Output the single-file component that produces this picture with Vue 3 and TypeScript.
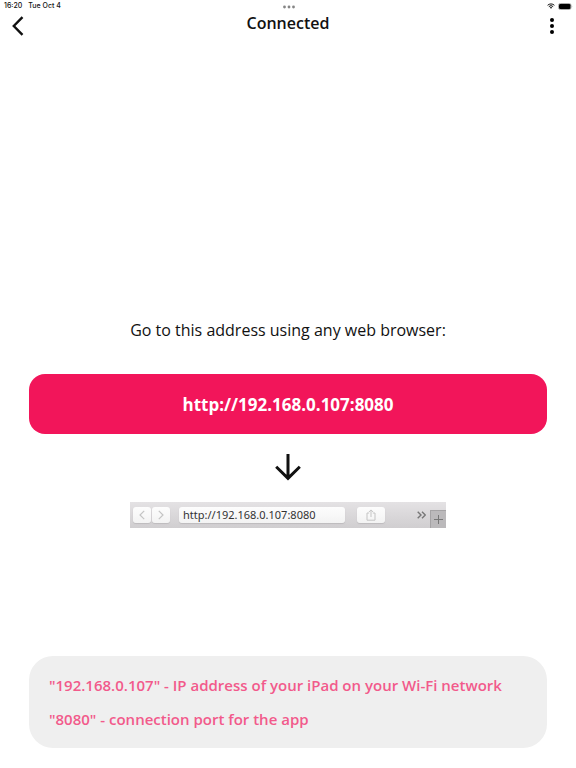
<script setup lang="ts">
import { computed, ref } from 'vue'

const host = ref('192.168.0.107')
const port = ref('8080')
const address = computed(() => `http://${host.value}:${port.value}`)
</script>

<template>
  <div class="screen">
    <div class="status">
      <div class="clock"><span>16:20</span><span>Tue Oct 4</span></div>
      <svg class="grabber" viewBox="0 0 12 4" aria-hidden="true">
        <circle cx="1.5" cy="2" r="1.4" /><circle cx="6" cy="2" r="1.4" /><circle cx="10.5" cy="2" r="1.4" />
      </svg>
      <div class="indicators">
        <svg class="wifi" viewBox="0 0 16 12" aria-hidden="true">
          <path d="M1.2 4.6a9.8 9.8 0 0 1 13.6 0M3.7 7.2a6.2 6.2 0 0 1 8.6 0" />
          <path class="dot" d="M5.5 9a3.7 3.7 0 0 1 5 0L8 11.6z" />
        </svg>
        <svg class="battery" viewBox="0 0 15 7" aria-hidden="true">
          <rect class="case" x="0.5" y="0.5" width="12.5" height="6" rx="1.8" />
          <rect x="1" y="1" width="11.5" height="5" rx="1.2" />
          <path class="cap" d="M13.8 2.4q1 1.1 0 2.2z" />
        </svg>
      </div>
    </div>

    <header class="bar">
      <button class="icon-button" type="button" aria-label="Back">
        <svg class="back" viewBox="0 0 12 20" aria-hidden="true"><path d="M10.5 1.2 1.8 10l8.7 8.8" /></svg>
      </button>
      <h1>Connected</h1>
      <button class="icon-button end" type="button" aria-label="More options">
        <svg class="more" viewBox="0 0 4 16" aria-hidden="true">
          <circle cx="2" cy="2" r="2" /><circle cx="2" cy="8" r="2" /><circle cx="2" cy="14" r="2" />
        </svg>
      </button>
    </header>

    <main>
      <p class="prompt">Go to this address using any web browser:</p>
      <button class="address" type="button">{{ address }}</button>
      <svg class="arrow" viewBox="0 0 26 28" aria-hidden="true"><path d="M13 0v24M1.2 12.8 13 24.3l11.8-11.5" /></svg>
      <div class="browser">
        <div class="nav">
          <button class="key" type="button" aria-label="Previous page">
            <svg class="chevron" viewBox="0 0 6 10" aria-hidden="true"><path d="M5.2.8 1 5l4.2 4.2" /></svg>
          </button>
          <button class="key" type="button" aria-label="Next page">
            <svg class="chevron" viewBox="0 0 6 10" aria-hidden="true"><path d="M.8.8 5 5 .8 9.2" /></svg>
          </button>
        </div>
        <input class="url" type="text" :value="address" readonly aria-label="Web address" />
        <button class="key share" type="button" aria-label="Share">
          <svg viewBox="0 0 10 12" aria-hidden="true"><path d="M3.2 4H1v7.2h8V4H6.8M5 8V1M2.9 3 5 .9 7.1 3" /></svg>
        </button>
        <button class="overflow" type="button" aria-label="More tools">
          <svg viewBox="0 0 9 8" aria-hidden="true"><path d="M.7.7 4 4 .7 7.3M5 .7 8.3 4 5 7.3" /></svg>
        </button>
        <button class="tab" type="button" aria-label="New tab">
          <svg viewBox="0 0 9 9" aria-hidden="true"><path d="M4.5 0v9M0 4.5h9" /></svg>
        </button>
      </div>
    </main>

    <footer class="note">
      <p>"{{ host }}" - IP address of your iPad on your Wi-Fi network</p>
      <p>"{{ port }}" - connection port for the app</p>
    </footer>
  </div>
</template>

<style>
body {
  margin: 0;
  background: #fff;
}
</style>

<style scoped>
.screen {
  box-sizing: border-box;
  min-height: 100vh;
  display: flex;
  flex-direction: column;
  padding-bottom: 20px;
  color: #111;
  font-family: "Open Sans", "Noto Sans", sans-serif;
}

button {
  margin: 0;
  padding: 0;
  border: 0;
  background: none;
  color: inherit;
  font: inherit;
  cursor: pointer;
}

svg {
  display: block;
}

h1,
p {
  margin: 0;
}

path {
  fill: none;
  stroke: currentColor;
}

.status {
  display: grid;
  grid-template-columns: 1fr auto 1fr;
  align-items: center;
  height: 12px;
  padding: 0 3px 0 4px;
  font: 500 7px/12px Inter, sans-serif;
}

.clock {
  display: flex;
  gap: 6px;
}

.grabber {
  width: 12px;
  height: 4px;
  margin-top: 2px;
  fill: #858585;
}

.indicators {
  display: flex;
  justify-content: flex-end;
  align-items: center;
  gap: 3px;
}

.wifi {
  width: 8px;
  height: 6px;
}

.wifi path {
  stroke-width: 2;
}

.wifi .dot {
  fill: currentColor;
  stroke: none;
}

.battery {
  width: 15px;
  height: 7px;
}

.battery .case {
  fill: none;
  stroke: #aaa;
}

.battery .cap {
  fill: #aaa;
  stroke: none;
}

.bar {
  display: grid;
  grid-template-columns: 1fr auto 1fr;
  align-items: center;
  height: 28px;
  padding: 0 12px;
}

.bar h1 {
  padding-bottom: 6px;
  font-size: 16px;
  line-height: 22px;
  font-weight: 600;
}

.icon-button {
  display: flex;
  align-items: center;
  height: 28px;
  width: 24px;
}

.end {
  justify-self: end;
  justify-content: center;
}

.back {
  width: 12px;
  height: 20px;
}

.back path {
  stroke-width: 2.4;
}

.more {
  width: 4px;
  height: 16px;
}

main {
  flex: 1;
  display: flex;
  flex-direction: column;
  align-items: center;
  justify-content: flex-end;
  padding: 0 29px 128px;
}

.prompt {
  font-size: 16px;
  line-height: 24px;
}

.address {
  width: 100%;
  height: 60px;
  margin-top: 32px;
  border-radius: 16px;
  background: #f2155a;
  color: #fff;
  font-size: 17px;
  font-weight: 700;
}

.arrow {
  width: 26px;
  height: 28px;
  margin: 20px 0;
}

.arrow path {
  stroke-width: 3;
}

.browser {
  box-sizing: border-box;
  display: flex;
  align-items: center;
  width: 100%;
  max-width: 316px;
  height: 26px;
  padding-left: 3px;
  background: linear-gradient(#e4e2e4, #d0ced0);
}

.nav {
  display: flex;
  gap: 1px;
  margin-right: 9px;
}

.key {
  display: flex;
  align-items: center;
  justify-content: center;
  width: 18px;
  height: 16px;
  border-radius: 3px;
  background: linear-gradient(#fdfdfd, #f3f3f3);
  box-shadow: 0 1px 1px #bdbbbd;
  color: #c4c4c4;
}

.chevron {
  width: 6px;
  height: 10px;
}

.chevron path {
  stroke-width: 1.2;
}

.url {
  box-sizing: border-box;
  flex: 1;
  min-width: 0;
  height: 16px;
  padding: 0 4px;
  border: 0;
  border-radius: 3px;
  background: linear-gradient(#fdfdfd, #f3f3f3);
  box-shadow: 0 1px 1px #bdbbbd;
  color: #333;
  font: 11px/16px "Noto Sans", "Open Sans", sans-serif;
}

.share {
  width: 28px;
  margin: 0 32px 0 12px;
}

.share svg {
  width: 10px;
  height: 12px;
}

.overflow {
  margin-right: 4px;
  color: #777;
}

.overflow svg {
  width: 9px;
  height: 8px;
}

.overflow path {
  stroke-width: 1.4;
}

.tab {
  display: flex;
  align-items: center;
  justify-content: center;
  align-self: flex-end;
  width: 16px;
  height: 18px;
  border-top: 1px solid #a5a3a5;
  border-left: 1px solid #a5a3a5;
  background: #bbb9bb;
  color: #777;
}

.tab svg {
  width: 9px;
  height: 9px;
}

.note {
  display: flex;
  flex-direction: column;
  gap: 10px;
  margin: 0 29px;
  padding: 17px 20px;
  border-radius: 24px;
  background: #efefef;
  color: #f25a8b;
  font-size: 15px;
  line-height: 24px;
  font-weight: 650;
}
</style>
